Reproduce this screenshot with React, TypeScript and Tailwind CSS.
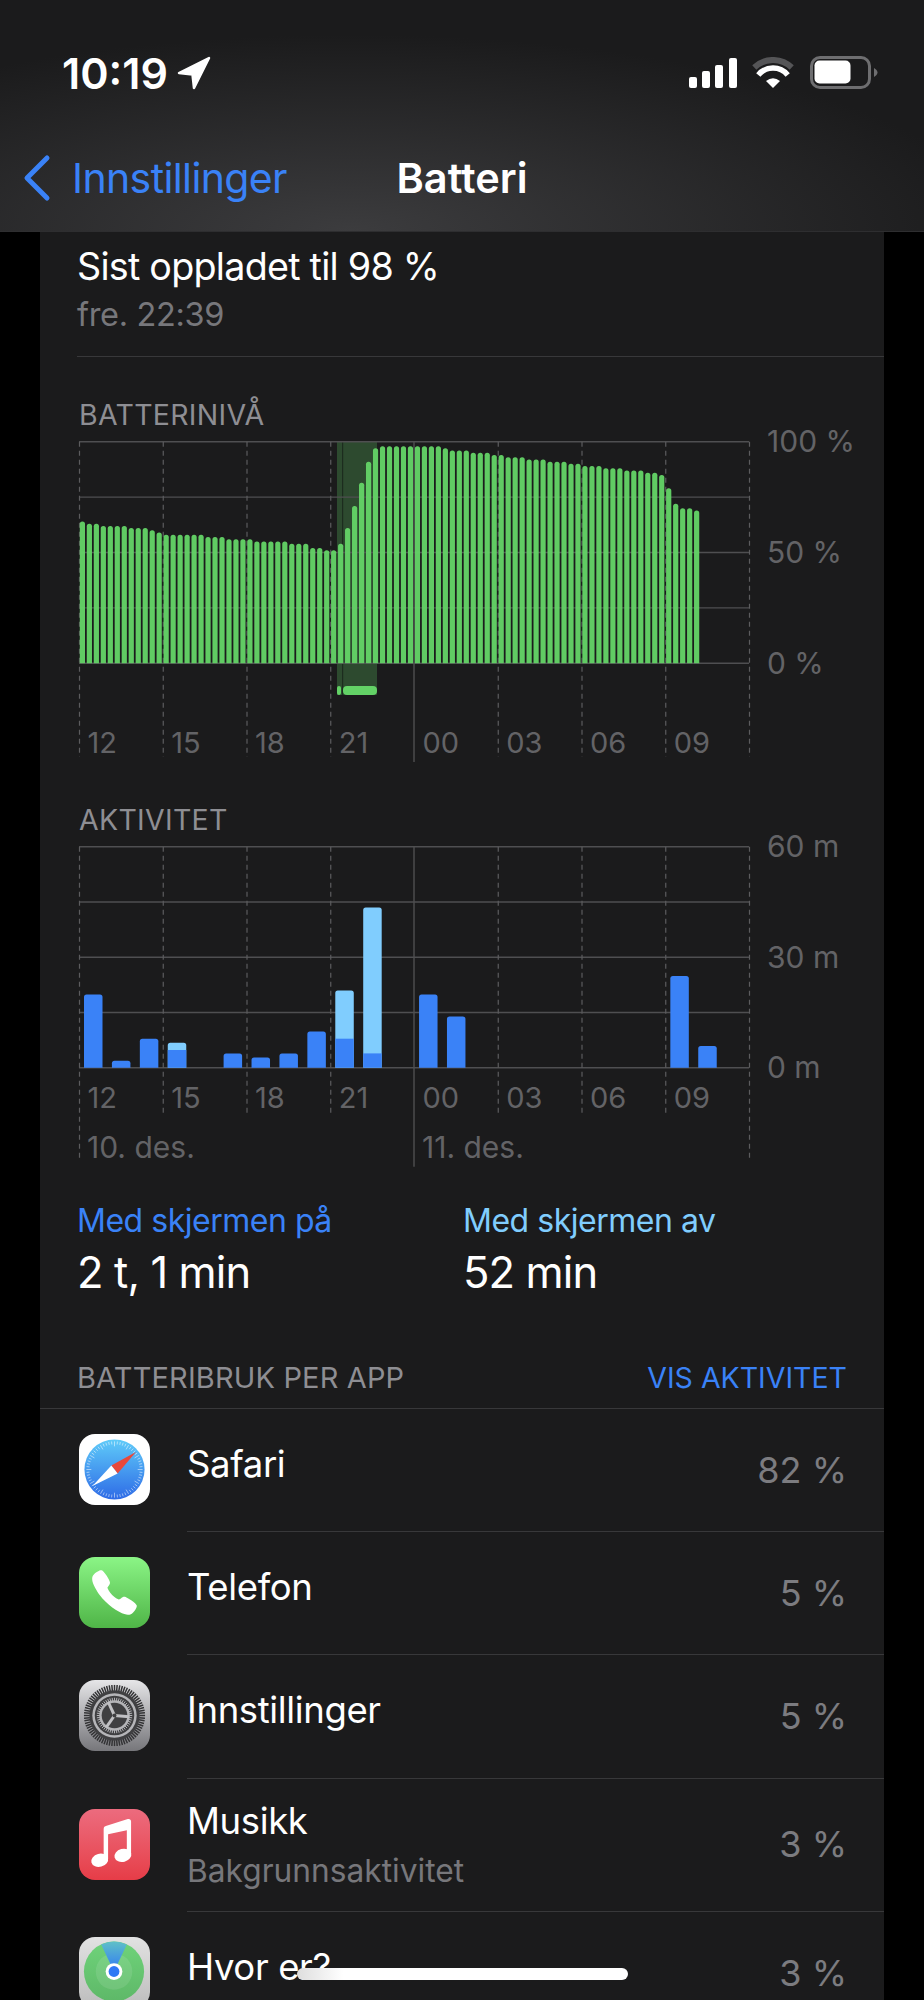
import React from "react";
import { IoCall } from "react-icons/io5";

// Battery level per quarter hour, in percent.
const LEVELS = [
  64, 63, 63, 62, 62, 62, 62, 61, 61, 61, 60, 59, 58, 58, 58, 58, 58, 58, 57, 57, 57, 56, 56, 56, 56, 55, 55, 55, 55, 55,
  54, 54, 54, 52, 52, 51, 51, 54, 61, 71, 81.5, 91, 97, 98, 98, 98, 98, 98, 98, 98, 98, 98, 97, 96, 96, 96, 95, 95, 95,
  94, 94, 93, 93, 93, 92, 92, 92, 91, 91, 91, 90, 90, 89, 89, 89, 88, 88, 88, 87, 87, 87, 86, 86, 85, 79, 72, 70, 70, 69,
];

// Hourly minutes of use, in chart pixels: on-screen part and total column height.
const ACTIVITY: [number, number, number][] = [
  [0, 73.3, 73.3], [1, 7, 7], [2, 29, 29], [3, 17.7, 25], [5, 14.3, 14.3], [6, 10.3, 10.3], [7, 14.3, 14.3], [8, 36.3, 36.3],
  [9, 29, 77.3], [10, 14.3, 160.3], [12, 73.3, 73.3], [13, 51.3, 51.3], [21, 91.7, 91.7], [22, 21.7, 21.7],
];

const HOURS = ["12", "15", "18", "21", "00", "03", "06", "09"];
const STEP = 83.75;
const GRID = "#4f4f51";
const DASH = "#5c5c5e";
const AXIS = "#636366";

function topRounded(x: number, y: number, w: number, base: number, r: number) {
  return `M${x} ${base}V${y + r}a${r} ${r} 0 0 1 ${r} ${-r}h${w - 2 * r}a${r} ${r} 0 0 1 ${r} ${r}V${base}Z`;
}

function Frame({
  top, gap, dashEnd, edgeEnd, solidEnd, hourBase, ticks,
}: {
  top: number; gap: number; dashEnd: number; edgeEnd: number; solidEnd: number; hourBase: number; ticks: string[];
}) {
  return (
    <>
      {[0, 1, 2, 3, 4].map((i) => (
        <line key={i} x1={0} x2={670} y1={top + i * gap} y2={top + i * gap} stroke={GRID} strokeWidth={1.4} />
      ))}
      {[0, 1, 2, 3, 4, 5, 6, 7, 8].map((i) =>
        i === 4 ? (
          <line key={i} x1={i * STEP} x2={i * STEP} y1={top} y2={solidEnd} stroke={GRID} strokeWidth={1.4} />
        ) : (
          <line
            key={i}
            x1={i * STEP + 0.5}
            x2={i * STEP + 0.5}
            y1={top}
            y2={i === 0 || i === 8 ? edgeEnd : dashEnd}
            stroke={DASH}
            strokeWidth={1.2}
            strokeDasharray="5 4"
          />
        ),
      )}
      {HOURS.map((h, i) => (
        <text key={h} x={i * STEP + 8.5} y={hourBase} fontSize={29} fill={AXIS}>
          {h}
        </text>
      ))}
      {ticks.map((t, i) => (
        <text key={t} x={688} y={top + i * gap * 2 + 10.5} fontSize={30} fill={AXIS}>
          {t}
        </text>
      ))}
    </>
  );
}

function LevelChart() {
  return (
    <svg width={810} height={340} className="block overflow-visible">
      <rect x={258} y={1.7} width={40} height={253.3} fill="#2d4a2f" />
      <rect x={263} y={1.7} width={1.2} height={253.3} fill="#1c2c1e" />
      <Frame top={1.7} gap={55.4} dashEnd={317} edgeEnd={317} solidEnd={322} hourBase={313} ticks={["100 %", "50 %", "0 %"]} />
      {LEVELS.map((v, i) => (
        <path key={i} d={topRounded(0.8 + i * 6.98, 223.3 - v * 2.216, 5.2, 223.3, 2.5)} fill="#63d266" fillOpacity={0.97} />
      ))}
      <rect x={258} y={246} width={4} height={9} rx={2} fill="#63d266" />
      <rect x={264} y={246} width={34} height={9} rx={4} fill="#63d266" />
    </svg>
  );
}

function ActivityChart() {
  const base = 221.7;
  return (
    <svg width={810} height={324} className="block overflow-visible">
      <Frame top={0.7} gap={55.25} dashEnd={266.7} edgeEnd={315.7} solidEnd={320.7} hourBase={262} ticks={["60 m", "30 m", "0 m"]} />
      {ACTIVITY.map(([slot, on, total]) => {
        const x = 5 + slot * 27.92;
        return total > on ? (
          <g key={slot}>
            <path d={topRounded(x, base - total, 18.5, base, 2.5)} fill="#80cdfe" />
            <rect x={x} y={base - on} width={18.5} height={on} fill="#3a82f7" />
          </g>
        ) : (
          <path key={slot} d={topRounded(x, base - total, 18.5, base, 2.5)} fill="#3a82f7" />
        );
      })}
      <text x={8} y={312} fontSize={30} fill={AXIS}>10. des.</text>
      <text x={343} y={312} fontSize={30} fill={AXIS}>11. des.</text>
    </svg>
  );
}

function SafariIcon() {
  return (
    <div className="h-[71px] w-[71px] rounded-[16px] bg-white">
      <svg width={71} height={71} viewBox="0 0 72 72">
        <defs>
          <linearGradient id="safariDial" x1="0" y1="0" x2="0" y2="1">
            <stop offset="0" stopColor="#5fcbf9" />
            <stop offset="1" stopColor="#2e6be6" />
          </linearGradient>
        </defs>
        <circle cx={36} cy={36} r={30.5} fill="url(#safariDial)" />
        {Array.from({ length: 60 }, (_, i) => {
          const a = (i * Math.PI) / 30;
          const inner = i % 5 === 0 ? 23.5 : 25.5;
          return (
            <line
              key={i}
              x1={36 + Math.cos(a) * inner}
              y1={36 + Math.sin(a) * inner}
              x2={36 + Math.cos(a) * 28.5}
              y2={36 + Math.sin(a) * 28.5}
              stroke="#ffffff"
              strokeOpacity={0.65}
              strokeWidth={0.8}
            />
          );
        })}
        <polygon points="57.7,18.3 39.2,40 32.8,32" fill="#e9483a" />
        <polygon points="13.7,52.7 39.2,40 32.8,32" fill="#ffffff" />
      </svg>
    </div>
  );
}

function PhoneIcon() {
  return (
    <div className="flex h-[71px] w-[71px] items-center justify-center rounded-[16px] bg-linear-to-b from-[#8bf586] to-[#4fb547]">
      <IoCall size={51} color="#ffffff" />
    </div>
  );
}

function SettingsIcon() {
  return (
    <div className="h-[71px] w-[71px] rounded-[16px] bg-linear-to-b from-[#e6e6e8] to-[#77777b]">
      <svg width={71} height={71} viewBox="0 0 72 72">
        {Array.from({ length: 72 }, (_, i) => {
          const a = (i * Math.PI) / 36;
          return (
            <line
              key={i}
              x1={36 + Math.cos(a) * 25}
              y1={36 + Math.sin(a) * 25}
              x2={36 + Math.cos(a) * 31}
              y2={36 + Math.sin(a) * 31}
              stroke="#333335"
              strokeWidth={1.5}
            />
          );
        })}
        <circle cx={36} cy={36} r={25.5} fill="#3f3f41" />
        <circle cx={36} cy={36} r={22.5} fill="#b5b5b8" />
        <circle cx={36} cy={36} r={20} fill="#3f3f41" />
        {Array.from({ length: 48 }, (_, i) => {
          const a = (i * Math.PI) / 24;
          return (
            <line
              key={i}
              x1={36 + Math.cos(a) * 15}
              y1={36 + Math.sin(a) * 15}
              x2={36 + Math.cos(a) * 18}
              y2={36 + Math.sin(a) * 18}
              stroke="#b5b5b8"
              strokeWidth={1}
            />
          );
        })}
        <circle cx={36} cy={36} r={15.5} fill="#b5b5b8" />
        <circle cx={36} cy={36} r={13} fill="#3f3f41" />
        {[-115, 5, 125].map((deg) => {
          const a = (deg * Math.PI) / 180;
          return (
            <line
              key={deg}
              x1={36}
              y1={36}
              x2={36 + Math.cos(a) * 15}
              y2={36 + Math.sin(a) * 15}
              stroke="#c0c0c3"
              strokeWidth={3}
            />
          );
        })}
        <circle cx={36} cy={36} r={2} fill="#3f3f41" />
      </svg>
    </div>
  );
}

function MusicIcon() {
  return (
    <div className="h-[71px] w-[71px] rounded-[16px] bg-linear-to-b from-[#ec6b7e] to-[#e63c47]">
      <svg width={71} height={71} viewBox="0 0 72 72" fill="#ffffff">
        <path d="M25 51V20.5c0-2 1-3 3-3.4L49.5 10.2c2-.4 3.3.6 3.3 2.6V46h-4.3V21.5L29.5 25.5V51z" />
        <ellipse cx={21} cy={52} rx={8.7} ry={6.6} transform="rotate(-15 21 52)" />
        <ellipse cx={44.5} cy={47} rx={8.7} ry={6.6} transform="rotate(-15 44.5 47)" />
      </svg>
    </div>
  );
}

function FindMyIcon() {
  return (
    <div className="h-[71px] w-[71px] rounded-[16px] bg-linear-to-b from-[#e2e2e2] to-[#bcbcbc]">
      <svg width={71} height={71} viewBox="0 0 72 72">
        <defs>
          <linearGradient id="findMyDisc" x1="0" y1="0" x2="0" y2="1">
            <stop offset="0" stopColor="#6fd37a" />
            <stop offset="1" stopColor="#5eb868" />
          </linearGradient>
          <linearGradient id="findMyBeam" x1="0" y1="0" x2="0" y2="1">
            <stop offset="0" stopColor="#5fc0c8" />
            <stop offset="1" stopColor="#2f78f5" />
          </linearGradient>
        </defs>
        <circle cx={35.5} cy={35} r={30.5} fill="url(#findMyDisc)" />
        <circle cx={35.5} cy={35} r={18.5} fill="#ffffff" fillOpacity={0.1} />
        <path d="M35.5 35L22.5 7.5A30.5 30.5 0 0 1 48.5 7.5Z" fill="url(#findMyBeam)" />
        <circle cx={35.5} cy={35} r={8.5} fill="#ffffff" />
        <circle cx={35.5} cy={35} r={5.5} fill="#2f78f5" />
      </svg>
    </div>
  );
}

export default function App() {
  return (
    <div className="relative h-[2000px] w-[924px] overflow-hidden bg-black text-white [font-family:Inter,sans-serif]">
      <header className="h-[232px] border-b border-[#2e2e30] bg-[radial-gradient(ellipse_70%_85%_at_38%_100%,#3c3c3e_0%,#1b1b1c_100%)]">
        {/* Status bar */}
        <div className="flex h-[90px] items-end justify-between pr-[46px] pl-[62px]">
          <div className="flex items-center">
            <span className="text-[43px] leading-[34px] font-semibold">10:19</span>
            <svg width={34} height={34} className="ml-[9px]">
              <path d="M2 17L32 2L17 32L15.5 18.5Z" fill="#ffffff" stroke="#ffffff" strokeWidth={2.5} strokeLinejoin="round" />
            </svg>
          </div>
          <div className="flex items-center">
            <svg width={48} height={32} fill="#ffffff">
              <rect x={0} y={20} width={8} height={11} rx={2} />
              <rect x={13} y={14} width={8} height={17} rx={2} />
              <rect x={26} y={8} width={8} height={23} rx={2} />
              <rect x={40} y={1} width={8} height={30} rx={2} />
            </svg>
            <svg width={42} height={32} fill="none" className="ml-[15px]">
              <path d="M2.3 10.5A27 27 0 0 1 39.7 10.5" stroke="#555557" strokeWidth={6} />
              <path d="M6.3 18A19 19 0 0 1 35.7 18" stroke="#ffffff" strokeWidth={5.5} />
              <path d="M21 31L14 24Q21 18.5 28 24Z" fill="#ffffff" />
            </svg>
            <svg width={68} height={34} fill="none" className="ml-[16px]">
              <rect x={1.5} y={1.5} width={58} height={30} rx={8.5} stroke="#6e6e70" strokeWidth={3} />
              <rect x={4.5} y={4.5} width={36} height={23} rx={5} fill="#ffffff" />
              <path d="M64 12c2 1 3.5 3 3.5 4.5S66 20 64 21Z" fill="#6e6e70" />
            </svg>
          </div>
        </div>
        {/* Navigation bar */}
        <div className="mt-[63px] grid h-[50px] grid-cols-[1fr_auto_1fr] items-center">
          <div className="flex items-center text-[#3a82f7]">
            <svg width={30} height={48} fill="none" className="ml-[22px]">
              <path d="M25 4L5 24L25 44" stroke="#3a82f7" strokeWidth={5} strokeLinecap="round" strokeLinejoin="round" />
            </svg>
            <span className="ml-[20px] text-[41px] leading-[50px] tracking-[-0.015em]">Innstillinger</span>
          </div>
          <span className="text-[41.5px] leading-[50px] font-semibold">Batteri</span>
          <div />
        </div>
      </header>

      <main className="mx-[40px] min-h-[1768px] bg-[#1b1b1c]">
        {/* Last charge */}
        <section className="ml-[37px] h-[125px] border-b border-[#38383a] pt-[15px]">
          <p className="text-[37.7px] leading-[38px] tracking-[-0.02em]">Sist oppladet til 98 %</p>
          <p className="mt-[11px] text-[32.5px] leading-[38px] tracking-[-0.01em] text-[#77777b]">fre. 22:39</p>
        </section>

        {/* Battery level */}
        <h2 className="mt-[43px] ml-[39px] h-[30px] text-[28.5px] leading-[30px] tracking-[0.01em] text-[#8e8e93]">BATTERINIVÅ</h2>
        <div className="mt-[10px] pl-[39px]">
          <LevelChart />
        </div>

        {/* Activity */}
        <h2 className="mt-[25px] ml-[39px] h-[30px] text-[28.5px] leading-[30px] tracking-[0.01em] text-[#8e8e93]">AKTIVITET</h2>
        <div className="mt-[11px] pl-[39px]">
          <ActivityChart />
        </div>

        {/* Screen time totals */}
        <div className="mt-[32px] flex pl-[37px]">
          <div className="w-[386px]">
            <p className="text-[32px] leading-[38px] tracking-[-0.015em] text-[#3a82f7]">Med skjermen på</p>
            <p className="mt-[8px] text-[43.5px] leading-[48px] tracking-[-0.02em]">2 t, 1 min</p>
          </div>
          <div>
            <p className="text-[32px] leading-[38px] tracking-[-0.015em] text-[#80cdfe]">Med skjermen av</p>
            <p className="mt-[8px] text-[43.5px] leading-[48px] tracking-[-0.02em]">52 min</p>
          </div>
        </div>

        {/* Per-app usage */}
        <div className="mt-[67px] flex h-[46px] items-start justify-between border-b border-[#38383a] pr-[37px] pl-[37px]">
          <span className="text-[29px] leading-[30px] tracking-[0.005em] text-[#8e8e93]">BATTERIBRUK PER APP</span>
          <span className="text-[28.5px] leading-[30px] text-[#3a82f7]">VIS AKTIVITET</span>
        </div>

        <AppRow name="Safari" pct="82 %" icon={<SafariIcon />} />
        <AppRow name="Telefon" pct="5 %" icon={<PhoneIcon />} />
        <AppRow name="Innstillinger" pct="5 %" icon={<SettingsIcon />} tall />
        <MusicRow />
        <AppRow name="Hvor er?" pct="3 %" icon={<FindMyIcon />} />
      </main>

      {/* Home indicator */}
      <div className="absolute top-[1968px] left-[297px] h-[12px] w-[331px] rounded-full bg-linear-to-r from-[#dedede] to-white to-[14%]" />
    </div>
  );
}

function AppRow({ name, pct, icon, tall }: { name: string; pct: string; icon: React.ReactNode; tall?: boolean }) {
  return (
    <div className={`flex pl-[39px] ${tall ? "h-[124px]" : "h-[123px]"}`}>
      <div className="mt-[25px]">{icon}</div>
      <div className="ml-[37px] flex flex-1 justify-between border-b border-[#38383a] pr-[37px]">
        <span className="pt-[36px] text-[36.5px] leading-[38px] tracking-[-0.01em]">{name}</span>
        <span className="pt-[42px] text-[36px] leading-[38px] text-[#7c7c80]">{pct}</span>
      </div>
    </div>
  );
}

function MusicRow() {
  return (
    <div className="flex h-[133px] pl-[39px]">
      <div className="mt-[30px]">
        <MusicIcon />
      </div>
      <div className="ml-[37px] flex flex-1 justify-between border-b border-[#38383a] pr-[37px]">
        <div className="pt-[23px]">
          <p className="text-[36.5px] leading-[38px] tracking-[-0.01em]">Musikk</p>
          <p className="mt-[12px] text-[31.7px] leading-[38px] text-[#77777b]">Bakgrunnsaktivitet</p>
        </div>
        <span className="pt-[46px] text-[36px] leading-[38px] text-[#7c7c80]">3 %</span>
      </div>
    </div>
  );
}
